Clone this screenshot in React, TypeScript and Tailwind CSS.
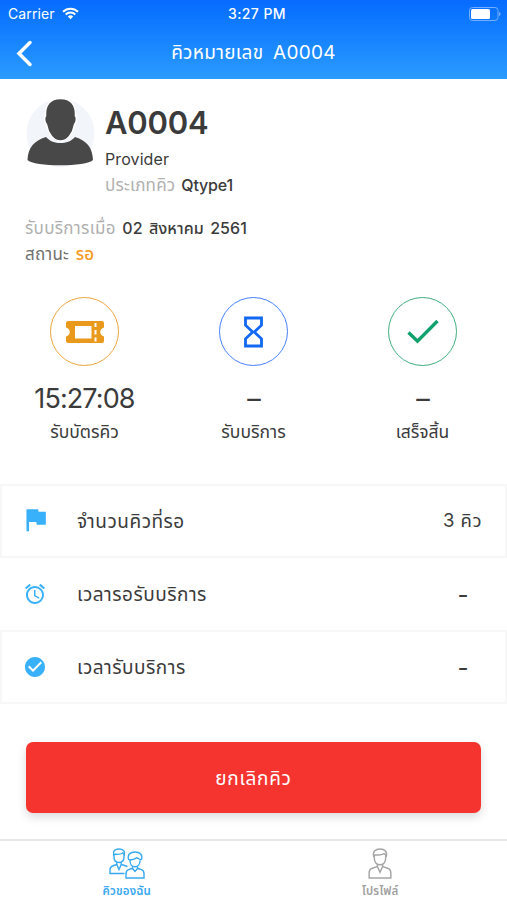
import type { ReactNode } from 'react'
import { MdAlarm, MdCheckCircle, MdFlag } from 'react-icons/md'

type Step = {
  id: string
  value: string
  label: string
  ring: string
  icon: ReactNode
}

type Row = {
  id: string
  label: string
  value: string
  icon: ReactNode
  box: string
}

const TicketIcon = () => (
  <svg width="38" height="22" viewBox="0 0 38 22">
    <path
      fill="#e99a1c"
      fillRule="evenodd"
      d="M2 0h34a2 2 0 0 1 2 2v4.500c-5 1-5 8 0 9V20a2 2 0 0 1-2 2H2a2 2 0 0 1-2-2v-4.500c5-1 5-8 0-9V2a2 2 0 0 1 2-2zM9 5v12.500h16.500V5zM28.500 2v4h2V2zM28.500 9v4.500h2V9zM28.500 16.500v4h2v-4z"
    />
  </svg>
)

const HourglassIcon = () => (
  <svg width="19" height="32" viewBox="0 0 19 32" fill="none" stroke="#1268f2" strokeWidth="2.800">
    <path d="M1.500 2h16v7.200L10.300 16l7.200 6.800V30h-16v-7.200L8.700 16 1.500 9.200z" />
  </svg>
)

const CheckIcon = () => (
  <svg width="32" height="26" viewBox="0 0 32 26" fill="none" stroke="#10a16d" strokeWidth="3.400">
    <path d="M1.500 13.500 10.500 22.200 30.500 2" />
  </svg>
)

const Avatar = () => (
  <svg width="70" height="70" viewBox="0 0 70 70">
    <circle cx="35.500" cy="36" r="34" fill="#f2f5fa" />
    <path
      fill="#484848"
      d="M2.500 63C3 51 9 43.500 21 40c4 4.500 9 6 14.500 6S46 44.500 50 40c12 3.500 17.500 11 18 23-6 7-59.500 7-65.500 0z"
    />
    <path
      fill="#484848"
      stroke="#fff"
      strokeWidth="1.500"
      d="M20.500 19C20 8 25 1.500 35.500 1.500S51 8 50.500 19c1.500 1.500 1 6.500-1 8.500-1.500 9-7 16.500-14 16.500s-12.500-7.500-14-16.500c-2-2-2.500-7-1-8.500z"
    />
  </svg>
)

const WifiIcon = () => (
  <svg width="17" height="13" viewBox="0 0 17 13" fill="none" stroke="#fff" strokeWidth="2">
    <path d="M1 4.800a10.600 10.600 0 0 1 15 0M3.700 7.500a6.800 6.800 0 0 1 9.600 0" />
    <path d="M5.800 9.500a3.900 3.900 0 0 1 5.400 0L8.500 12.300z" fill="#fff" stroke="none" />
  </svg>
)

const BatteryIcon = () => (
  <svg width="32" height="14" viewBox="0 0 32 14">
    <rect x=".5" y=".5" width="28.500" height="13" rx="3" fill="none" stroke="#75aeff" />
    <rect x="2" y="2" width="19" height="10" rx="1.500" fill="#fff" />
    <path d="M30 5c2 .5 2 3.500 0 4z" fill="#75aeff" />
  </svg>
)

const ProfileTabIcon = () => (
  <svg width="24" height="31" viewBox="0 0 23 30" fill="none" stroke="#a5a5a5" strokeWidth="1.400">
    <path d="M5.500 8.500C4 3.500 7 1 11.500 1s7.500 2.500 6 7.500M5.500 6.500c3.500.5 8 .3 10-1l2 1.500M6 7v3c0 4 2.700 6.300 5.500 6.300S17 14 17 10V7" />
    <path d="M9 15.500V18l2.500 5.500L14 18v-2.500M8.500 18l-5 1.800C1.500 20.700 1 22 1 24.500V29h21v-4.500c0-2.500-.5-3.800-2.500-4.700l-5-1.800" />
  </svg>
)

const QueueTabIcon = () => (
  <svg width="36" height="31" viewBox="0 0 36 31" fill="none" stroke="#38a9ef" strokeWidth="1.400">
    <path d="M4.700 7.500C3.500 3 6 1 10 1s6.500 2 5.300 6.500M4.700 6c3 .5 7.300.3 9-1l1.600 1.300M5 6.500V9c0 3.500 2.200 5.500 5 5.500s5-2 5-5.500V6.500" />
    <path d="M7.800 14v2.500l2.200 5 2.200-5V14M7.500 16.500 3.500 18C1.500 18.800 1 20 1 22v3.500h14.500M12.500 16.500l6 2" />
    <path d="M19.700 12C18 6.500 21 4 26 4s8 2.500 6.300 8M20 12c3.500 0 6-.8 7.700-2.300L32 12M21 12.500c0 3.700 2 6.300 5 6.300s5-2.600 5-6.300" />
    <path d="M23.500 18.500v2l2.500 3 2.500-3v-2M23 20.500l-3.500 1.200c-2 .8-2.500 2-2.500 4V30h18v-4.300c0-2-.5-3.200-2.500-4L29 20.500" />
  </svg>
)

const steps: Step[] = [
  { id: 'ticket', value: '15:27:08', label: 'รับบัตรคิว', ring: 'border-[#e9a53b]', icon: <TicketIcon /> },
  { id: 'service', value: '–', label: 'รับบริการ', ring: 'border-[#477fff]', icon: <HourglassIcon /> },
  { id: 'done', value: '–', label: 'เสร็จสิ้น', ring: 'border-[#42ae7f]', icon: <CheckIcon /> },
]

const rows: Row[] = [
  { id: 'waiting', label: 'จำนวนคิวที่รอ', value: '3 คิว', icon: <MdFlag size={31} className="-mt-[3px]" />, box: 'border-2 border-[#f7f7f7] h-[74px]' },
  { id: 'wait-time', label: 'เวลารอรับบริการ', value: '-', icon: <MdAlarm size={24} />, box: 'border-x-2 border-transparent h-[72px]' },
  { id: 'service-time', label: 'เวลารับบริการ', value: '-', icon: <MdCheckCircle size={24} />, box: 'border-2 border-[#f7f7f7] h-[74px]' },
]

export default function App() {
  return (
    <main className="flex h-[900px] w-[507px] flex-col overflow-hidden bg-white font-[Inter,'Noto_Sans_Thai','Noto_Sans',sans-serif] text-[#3b3b3b]">
      <header className="h-[79px] shrink-0 bg-linear-to-b from-[#076bff] to-[#2b9bff] text-white">
        <div className="grid h-[27px] grid-cols-3 items-center pr-[6px] pl-2">
          <div className="flex items-center gap-[7px] text-[14px]">
            <span className="tracking-[0.1px]">Carrier</span>
            <WifiIcon />
          </div>
          <span className="pl-[5px] text-center text-[14px] font-medium tracking-[0.4px]">3:27 PM</span>
          <div className="flex justify-end">
            <BatteryIcon />
          </div>
        </div>
        <div className="grid h-[52px] grid-cols-[60px_1fr_60px] items-center">
          <svg className="ml-4" width="17" height="27" viewBox="0 0 17 27" fill="none" stroke="#fff" strokeWidth="3.500" strokeLinecap="round">
            <path d="M14 2.500 3 13.500l11 11" />
          </svg>
          <h1 className="text-center text-[19px] tracking-[0.3px] [word-spacing:4px]">คิวหมายเลข A0004</h1>
        </div>
      </header>

      <section className="h-[206px] shrink-0 px-[25px] pt-[18px]">
        <div className="flex h-[112px] gap-[10px]">
          <Avatar />
          <div>
            <p className="mt-[8px] h-[36px] text-[31px] leading-[36px] font-semibold tracking-[-0.2px]">A0004</p>
            <p className="mt-[6px] h-[25px] text-[16px] leading-[25px] tracking-[0.1px]">Provider</p>
            <p className="h-[26px] text-[16px] leading-[26px] [word-spacing:1.5px]">
              <span className="text-[17px] tracking-[0.2px] text-[#b0b0b0]">ประเภทคิว</span>{' '}
              <span className="font-medium tracking-[-0.2px]">Qtype1</span>
            </p>
          </div>
        </div>
        <p className="mt-[6px] h-[26px] text-[16px] leading-[26px] [word-spacing:2px]">
          <span className="text-[17px] tracking-[0.3px] text-[#b0b0b0]">รับบริการเมื่อ</span>{' '}
          <span className="font-medium tracking-[0.1px]">02 สิงหาคม 2561</span>
        </p>
        <p className="h-[26px] text-[17px] leading-[26px] [word-spacing:2px]">
          <span className="tracking-[0.2px] text-[#707070]">สถานะ</span> <span className="font-medium text-[#f39a24]">รอ</span>
        </p>
      </section>

      <section className="grid h-[199px] shrink-0 grid-cols-3 pt-[12px]">
        {steps.map(step => (
          <div key={step.id} className="flex flex-col items-center">
            <div className={`flex size-[69px] items-center justify-center rounded-full border-[1.5px] ${step.ring}`}>
              {step.icon}
            </div>
            <p className="mt-[16px] h-[34px] text-[27px] leading-[34px] tracking-[-0.9px]">{step.value}</p>
            <p className="h-[32px] text-[17.500px] leading-[32px]">{step.label}</p>
          </div>
        ))}
      </section>

      <ul className="shrink-0">
        {rows.map(row => (
          <li key={row.id} className={`flex items-center pr-[23px] text-[19px] tracking-[0.5px] ${row.box}`}>
            <span className="flex w-[66px] justify-center text-[#38b0fa]">{row.icon}</span>
            <span className="mt-[2px] ml-[9px] flex-1">{row.label}</span>
            <span className={row.value === '-' ? 'mt-px mr-[13px] text-[24px]' : 'text-[18.500px]'}>{row.value}</span>
          </li>
        ))}
      </ul>

      <div className="h-[135px] shrink-0 px-[26px] pt-[38px]">
        <button className="h-[71px] w-full rounded-[7px] bg-[#f5342f] pt-[3px] text-[19px] tracking-[0.7px] text-white shadow-[0_4px_10px_rgba(0,0,0,0.15)]">
          ยกเลิกคิว
        </button>
      </div>

      <nav className="grid flex-1 grid-cols-2 border-t-2 border-[#e6e6e6] text-[11.500px] font-semibold tracking-[0.2px]">
        <div className="flex flex-col items-center pt-[7px] text-[#38a9ef]">
          <QueueTabIcon />
          <span className="mt-[3px] leading-[18px]">คิวของฉัน</span>
        </div>
        <div className="flex flex-col items-center pt-[7px] text-[#a0a0a0]">
          <ProfileTabIcon />
          <span className="mt-[3px] leading-[18px]">โปรไฟล์</span>
        </div>
      </nav>
    </main>
  )
}
